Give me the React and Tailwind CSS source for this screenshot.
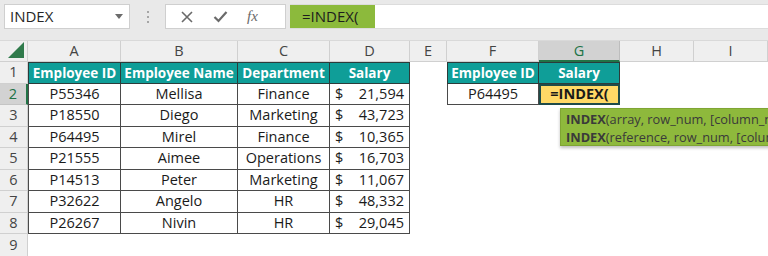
import React from 'react';

const font = { fontFamily: '"Open Sans", "Noto Sans", Arial, sans-serif' };

const employees = [
  ['P55346', 'Mellisa', 'Finance', '21,594'],
  ['P18550', 'Diego', 'Marketing', '43,723'],
  ['P64495', 'Mirel', 'Finance', '10,365'],
  ['P21555', 'Aimee', 'Operations', '16,703'],
  ['P14513', 'Peter', 'Marketing', '11,067'],
  ['P32622', 'Angelo', 'HR', '48,332'],
  ['P26267', 'Nivin', 'HR', '29,045'],
];

const letters = ['A', 'B', 'C', 'D', 'E', 'F', 'G', 'H', 'I'];

const FormulaBar = () => (
  <div className="h-[41px] bg-[#e9e9e9] pt-[4px] border-b border-[#d9d9d9]">
    <div className="flex items-start h-[26px]">
      {/* name box */}
      <div className="ml-[4px] w-[126px] h-[25px] bg-white border border-[#cfcfcf] flex items-center justify-between pl-[5px] pr-[6px]">
        <span className="text-[15px] text-[#262626]">INDEX</span>
        <svg width="8" height="5" viewBox="0 0 8 5"><path d="M0 0h8L4 5z" fill="#6b6b6b" /></svg>
      </div>
      {/* splitter dots */}
      <div className="w-[35px] h-[25px] flex flex-col items-center justify-center gap-[3px]">
        <div className="w-[2px] h-[2px] bg-[#a6a6a6]" />
        <div className="w-[2px] h-[2px] bg-[#a6a6a6]" />
        <div className="w-[2px] h-[2px] bg-[#a6a6a6]" />
      </div>
      {/* cancel / enter / fx */}
      <div className="w-[121px] h-[25px] bg-white border border-[#cfcfcf] flex items-center pl-[14px] gap-[19px]">
        <svg width="14" height="14" viewBox="0 0 14 14"><path d="M2 2l10 10M12 2L2 12" stroke="#6a6a6a" strokeWidth="1.6" /></svg>
        <svg width="15" height="13" viewBox="0 0 15 13"><path d="M1.5 7l4 4L13.5 2" stroke="#6a6a6a" strokeWidth="2.2" fill="none" /></svg>
        <span className="text-[15px] italic text-[#6a6a6a]" style={{ fontFamily: '"Liberation Serif", "DejaVu Serif", serif' }}>fx</span>
      </div>
      {/* formula input */}
      <div className="ml-[4px] flex-1 h-[25px] bg-white border-t border-b border-[#dcdcdc] flex">
        <div className="w-[85px] h-full bg-[#8cba3c] flex items-center pl-[12px] text-[15px] text-[#1d1d1d]">=INDEX(</div>
      </div>
    </div>
  </div>
);

const head = 'bg-[#0f9e98] border-[#2c3b3a] flex items-center justify-center font-bold text-white text-[13.5px]';

export default function App() {
  return (
    <div className="w-[768px] h-[256px] overflow-hidden bg-white relative" style={font}>
      <FormulaBar />

      <div className="grid grid-cols-[28px_93px_117px_92px_80px_37px_92px_81px_74px_1fr] grid-rows-[21px_repeat(9,21.5px)] text-[14.5px] text-[#1a1a1a] whitespace-nowrap">
        {/* column header row */}
        <div className="bg-[#efefef] border-r border-b border-[#d0d0d0] flex items-end justify-end p-[3px]">
          <svg width="16" height="16" viewBox="0 0 16 16"><path d="M16 0v16H0z" fill="#2f7a4b" /></svg>
        </div>
        {letters.map((l) => (
          <div
            key={l}
            className={l === 'G'
              ? 'bg-[#d2d2d2] border-r border-[#bdbdbd] border-b-2 border-b-[#217346] flex items-center justify-center text-[#217346]'
              : 'bg-[#efefef] border-r border-b border-[#d0d0d0] flex items-center justify-center text-[#444444]'}
          >
            {l}
          </div>
        ))}

        {/* row 1 */}
        <div className="bg-[#efefef] border-r border-b border-[#d0d0d0] flex items-center justify-center text-[#444444]">1</div>
        <div className={`${head} border`}>Employee ID</div>
        <div className={`${head} border-t border-r border-b`}>Employee Name</div>
        <div className={`${head} border-t border-r border-b`}>Department</div>
        <div className={`${head} border-t border-r border-b`}>Salary</div>
        <div />
        <div className={`${head} border`}>Employee ID</div>
        <div className={`${head} border-t border-r border-b`}>Salary</div>
        <div />
        <div />

        {/* rows 2-8 */}
        {employees.map((e, i) => (
          <React.Fragment key={e[0]}>
            <div
              className={i === 0
                ? 'bg-[#d2d2d2] border-b border-[#c4c4c4] border-r-2 border-r-[#217346] flex items-center justify-center text-[#217346]'
                : 'bg-[#efefef] border-r border-b border-[#d0d0d0] flex items-center justify-center text-[#444444]'}
            >
              {i + 2}
            </div>
            <div className="border-l border-r border-b border-[#4a4a4a] flex items-center justify-center">{e[0]}</div>
            <div className="border-r border-b border-[#4a4a4a] flex items-center justify-center">{e[1]}</div>
            <div className="border-r border-b border-[#4a4a4a] flex items-center justify-center">{e[2]}</div>
            <div className="border-r border-b border-[#4a4a4a] flex items-center justify-between pl-[5px] pr-[5px]">
              <span>$</span>
              <span>{e[3]}</span>
            </div>
            <div />
            {i === 0 ? (
              <>
                <div className="border-l border-r border-b border-[#4a4a4a] flex items-center justify-center">P64495</div>
                <div className="bg-[#ffd966] border-2 border-[#1f4b49] flex items-center justify-center font-bold">=INDEX(</div>
              </>
            ) : (
              <>
                <div />
                <div />
              </>
            )}
            <div />
            <div />
          </React.Fragment>
        ))}

        {/* row 9 */}
        <div className="bg-[#efefef] border-r border-[#d0d0d0] flex items-center justify-center text-[#444444]">9</div>
      </div>

      {/* function tooltip */}
      <div className="absolute left-[560px] top-[108px] w-[212px] h-[38px] bg-[#8eb93c] border border-[#7fa533] shadow-[0_2px_3px_rgba(0,0,0,0.25)] px-[5px] pt-[1px] text-[12.8px] leading-[18px] text-[#3a3a3a] whitespace-nowrap overflow-hidden">
        <div><span className="font-bold">INDEX</span>(array, row_num, [column_num])</div>
        <div><span className="font-bold">INDEX</span>(reference, row_num, [column_num], [area_num])</div>
      </div>
    </div>
  );
}
